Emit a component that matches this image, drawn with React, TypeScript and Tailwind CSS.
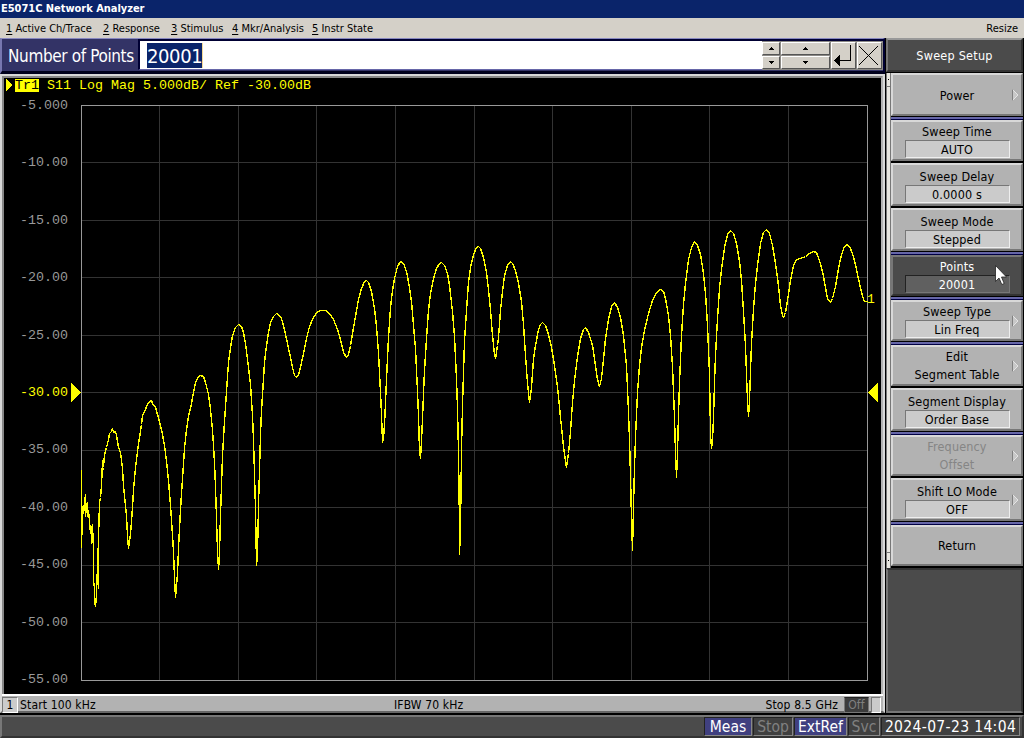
import React from 'react';
import clsx from 'clsx';

const TRACE =
  '81,469 81,547 82,506 82,515 83,505 83,513 84,504 85,494 85,516 86,504 87,502 87,516 88,510 89,520 90,533 91,526 91,543 92,524 93,550 93,580 94,588 94,600 95,606 96,594 97,566 97,548 98,588 98,513 99,526 99,502 100,497 101,485 102,460 102,470 103,467 104,454 106,447 108,439 109,433 111,431 112,428 113,432 115,431 116,435 118,447 120,452 122,468 123,486 124,495 126,516 127,535 128,548 130,533 131,521 132,507 133,489 135,467 137,451 139,437 141,424 142,415 144,411 147,404 149,401 151,400 152,403 155,407 159,421 162,434 164,445 166,461 168,480 170,505 172,535 173,551 174,577 175,597 176,585 177,573 178,548 180,509 182,478 184,448 186,429 188,416 191,403 193,392 195,382 198,376 200,375 203,376 205,382 208,394 210,409 212,429 214,462 215,487 216,518 217,551 218,569 219,553 220,514 221,486 222,455 224,421 226,391 228,362 230,347 232,335 235,327 238,324 241,326 243,332 245,343 247,359 250,384 252,415 253,440 254,473 255,509 256,565 257,553 258,505 259,470 260,434 261,410 262,394 264,362 266,345 268,332 270,322 273,316 276,313 278,314 281,318 284,329 287,343 290,357 292,367 294,375 296,377 298,374 300,367 303,353 306,338 309,326 313,317 317,311 321,310 325,310 329,313 333,319 337,329 340,339 343,352 346,357 348,354 350,345 352,333 355,316 358,299 361,288 364,281 366,280 368,282 371,291 374,308 376,326 378,352 380,392 381,414 382,442 383,438 384,424 385,402 386,379 388,337 390,307 392,290 394,278 397,266 400,261 403,263 406,271 409,287 411,301 413,325 415,348 417,391 418,415 419,450 420,458 421,441 422,418 423,393 424,370 426,338 428,310 430,293 433,278 436,268 439,263 441,262 444,265 447,273 449,285 452,311 454,336 456,378 457,408 458,452 459,525 459,554 460,527 461,450 462,405 463,372 464,340 466,310 468,282 470,267 473,254 476,247 478,246 480,248 483,257 486,272 488,289 490,309 492,335 494,354 495,358 497,345 498,337 500,310 502,291 504,275 507,265 510,261 512,263 515,270 518,283 521,301 523,324 525,355 527,383 529,402 531,387 533,359 535,345 538,329 540,324 542,322 545,325 548,334 551,347 554,365 557,386 560,417 563,446 566,467 568,453 570,431 572,402 574,380 577,356 580,338 583,329 585,327 588,332 592,345 595,365 597,379 599,386 601,378 603,359 605,338 608,319 611,306 614,302 617,307 620,317 623,335 626,365 628,411 629,440 630,475 631,519 632,550 633,506 634,467 635,437 637,392 639,365 641,347 644,330 648,313 652,300 656,292 660,289 663,291 665,298 668,315 670,335 672,366 674,417 675,452 676,477 677,453 678,414 679,382 681,335 683,304 685,283 688,259 691,247 694,241 697,245 700,254 703,273 705,293 707,325 709,373 710,434 711,448 712,440 713,417 714,383 715,355 717,318 719,288 721,269 724,247 727,234 730,230 733,233 736,243 739,261 741,280 743,311 745,346 746,374 747,400 748,416 749,400 750,371 751,343 753,309 755,283 757,265 760,243 763,232 766,229 769,233 772,245 775,263 778,285 780,305 782,315 783,317 785,312 787,300 790,280 793,265 796,259 800,258 805,256 809,253 813,251 816,252 819,260 822,271 825,287 827,298 830,302 832,298 835,286 838,268 841,254 844,246 847,244 850,248 853,256 856,269 859,283 862,296 864,301 867,301';

const GRID_X = [159, 238, 316, 395, 474, 552, 631, 709, 788];
const GRID_Y = [162, 220, 277, 335, 392, 450, 507, 565, 622];

const Y_LABELS = [
  '-5.000', '-10.00', '-15.00', '-20.00', '-25.00', '-30.00',
  '-35.00', '-40.00', '-45.00', '-50.00', '-55.00',
];

const MENU = [
  { hotkey: '1', label: 'Active Ch/Trace', width: 'w-[97px]' },
  { hotkey: '2', label: 'Response', width: 'w-[68px]' },
  { hotkey: '3', label: 'Stimulus', width: 'w-[61px]' },
  { hotkey: '4', label: 'Mkr/Analysis', width: 'w-[80px]' },
  { hotkey: '5', label: 'Instr State', width: 'w-[70px]' },
];

type SoftkeyProps = {
  label: string;
  value?: string;
  second?: string;
  arrow?: boolean;
  active?: boolean;
  disabled?: boolean;
  group?: boolean;
};

const SOFTKEYS: SoftkeyProps[] = [
  { label: 'Power', arrow: true },
  { label: 'Sweep Time', value: 'AUTO', group: true },
  { label: 'Sweep Delay', value: '0.0000 s' },
  { label: 'Sweep Mode', value: 'Stepped' },
  { label: 'Points', value: '20001', active: true, group: true },
  { label: 'Sweep Type', value: 'Lin Freq', arrow: true, group: true },
  { label: 'Edit', second: 'Segment Table', arrow: true, group: true },
  { label: 'Segment Display', value: 'Order Base' },
  { label: 'Frequency', second: 'Offset', arrow: true, disabled: true, group: true },
  { label: 'Shift LO Mode', value: 'OFF', arrow: true },
  { label: 'Return', group: true },
];

function Softkey({ label, value, second, arrow, active, disabled, group }: SoftkeyProps) {
  return (
    <div className="flex h-[45px] flex-col">
      {/* blue divider between softkey groups */}
      {group && <div className="-mt-[2px] h-[4px] shrink-0 border-t border-b border-t-black border-b-[#000044] bg-[#6666a8]" />}
      <div
        className={clsx(
          'relative mb-[2px] flex min-h-0 flex-1 flex-col items-center justify-end border-2 text-[12.5px] leading-[18px] tracking-[0.15px]',
          active
            ? 'border-t-[#777] border-l-[#777] border-r-[#333] border-b-[#333] bg-[#4b4b4b]'
            : 'border-t-[#d8d8d8] border-l-[#d8d8d8] border-r-[#777] border-b-[#777] bg-[#b2b2b2]',
          active ? 'text-white' : disabled ? 'text-[#858585]' : 'text-black',
          !value && !second && 'pb-[9px]',
        )}
      >
        <div className={clsx('whitespace-nowrap', value && 'relative top-px')}>{label}</div>
        {second && <div className="whitespace-nowrap">{second}</div>}
        {value && (
          <div
            className={clsx(
              'mb-px h-[18px] w-[105px] border text-center leading-[17px]',
              active
                ? 'border-t-[#222] border-l-[#222] border-r-[#777] border-b-[#777] bg-[#606060]'
                : 'border-t-[#777] border-l-[#777] border-r-[#eee] border-b-[#eee] bg-[#cbcbcb]',
            )}
          >
            {value}
          </div>
        )}
        {arrow && (
          <svg className="absolute top-1/2 right-[2px] -mt-[6px]" width="7" height="12" viewBox="0 0 7 12">
            <path d="M.5 .5V11.5L6 6Z" fill="#c8c8c8" />
            <path d="M.5 .5L6 6L.5 11.5" stroke="#e4e4e4" fill="none" />
            <path d="M.5 .5V11.5" stroke="#808080" />
          </svg>
        )}
      </div>
    </div>
  );
}

function Spin({ up }: { up?: boolean }) {
  return (
    <div className="flex h-[13px] items-center justify-center border border-t-white border-l-white border-r-[#555] border-b-[#555] bg-[#d4d0c8]">
      <svg width="5" height="3" viewBox="0 0 5 3" shapeRendering="crispEdges">
        <path d={up ? 'M2 0H3V1H4V2H5V3H0V2H1V1H2Z' : 'M0 0H5V1H4V2H3V3H2V2H1V1H0Z'} />
      </svg>
    </div>
  );
}

function EntryBar() {
  return (
    <div className="flex h-[36px] w-[885px] items-start border-t border-l-2 border-t-[#8888c0] border-l-[#7777b0] border-r-2 border-r-[#000033] border-b-[3px] border-b-[#00001c] bg-[#333366]">
      <div className="w-[136px] pl-[6px] text-[17px] leading-[34px] tracking-[-0.37px] whitespace-nowrap text-white">
        Number of Points
      </div>
      <div className="flex h-[31px] flex-1 items-center border-t-2 border-l-2 border-b border-t-[#000033] border-l-[#000033] border-b-[#6666a8] bg-white pl-[7px]">
        <span className="h-[25px] w-[55px] bg-[#0a246a] text-[20px] leading-[26px] tracking-[-0.4px] whitespace-nowrap text-white">
          20001
        </span>
        <span className="h-[25px] w-px bg-[#f5db95]" />
      </div>
      <div className="flex h-[31px] w-[121px] gap-px border-t-2 border-t-[#000033] bg-[#8c8a86] pt-px pr-px">
        <div className="flex w-[18px] flex-col gap-px">
          <Spin up />
          <Spin />
        </div>
        <div className="flex w-[49px] flex-col gap-px">
          <Spin up />
          <Spin />
        </div>
        <div className="h-[27px] w-[25px] border border-t-white border-l-white border-r-[#555] border-b-[#555] bg-[#d4d0c8]">
          <svg width="23" height="25" viewBox="0 0 23 25" shapeRendering="crispEdges">
            <path d="M18.5 2V17.5H8" stroke="#000" fill="none" />
            <path d="M2 17.5L8 12V23Z" />
          </svg>
        </div>
        <div className="h-[27px] w-[25px] border border-t-white border-l-white border-r-[#555] border-b-[#555] bg-[#d4d0c8]">
          <svg width="23" height="25" viewBox="0 0 23 25">
            <path d="M1 3L20 22M20 3L1 22" stroke="#000" fill="none" />
          </svg>
        </div>
      </div>
    </div>
  );
}

function Plot() {
  return (
    <div className="relative h-[616px] w-full bg-black font-['Liberation_Mono',monospace] text-[13.33px]">
      <div className="flex h-[14px] items-center pl-px leading-[14px] text-[#ffff00]">
        <svg width="9" height="12" viewBox="0 0 9 12" shapeRendering="crispEdges">
          <path d="M1 0L8 6L1 12Z" fill="#ffff00" />
        </svg>
        <span className="ml-px h-[13px] w-[24px] bg-[#ffff00] leading-[14px] text-black">Tr1</span>
        <span className="ml-[8px] pt-px whitespace-pre">S11 Log Mag 5.000dB/ Ref -30.00dB</span>
      </div>
      <div className="flex h-[595px] w-[64px] flex-col justify-between pt-[7px]">
        {Y_LABELS.map((label) => (
          <div
            key={label}
            className={clsx('h-[14px] text-right leading-[14px]', label === '-30.00' ? 'text-[#ffff00]' : 'text-[#999]')}
          >
            {label}
          </div>
        ))}
      </div>
      {/* grid, trace and reference markers */}
      <svg className="absolute inset-0" width="877" height="616" viewBox="4 78 877 616" shapeRendering="crispEdges">
        {GRID_X.map((x) => (
          <rect key={x} x={x} y="105" width="1" height="575" fill="#333" />
        ))}
        {GRID_Y.map((y) => (
          <rect key={y} x="81" y={y} width="786" height="1" fill="#333" />
        ))}
        <rect x="81.5" y="105.5" width="786" height="575" fill="none" stroke="#999" />
        <polyline points={TRACE} transform="translate(.5 .5)" fill="none" stroke="#ffff00" strokeWidth="1.4" strokeLinejoin="bevel" />
        <path d="M71 383V402L81 392.5Z" fill="#ffff00" />
        <path d="M878 383V402L868 392.5Z" fill="#ffff00" />
        <text x="867" y="303" fontSize="13" fill="#ffff00">1</text>
      </svg>
    </div>
  );
}

function ChannelWindow() {
  return (
    <div className="flex h-[639px] w-[885px] flex-col border-2 border-t-[#d8d8d8] border-l-[#d8d8d8] border-r-[#d8d8d8] border-b-[#666] bg-[#b2b2b2]">
      <div className="h-[618px] border-t-2 border-l-2 border-r-2 border-t-[#888] border-l-[#888] border-r-[#b2b2b2]">
        <Plot />
      </div>
      <div className="flex h-[19px] items-center border-t-2 border-t-white text-[12px] leading-[17px] tracking-[0.15px] whitespace-nowrap text-black">
        <div className="h-[16px] w-[16px] border border-t-[#777] border-l-[#777] border-r-white border-b-white bg-[#cbcbcb] text-center leading-[15px]">
          1
        </div>
        <div className="ml-[2px] w-[374px] pt-px">Start 100 kHz</div>
        <div className="flex-1 pt-px">IFBW 70 kHz</div>
        <div className="mr-[6px] pt-px">Stop 8.5 GHz</div>
        <div className="mr-[2px] h-[16px] w-[25px] border border-t-[#222] border-l-[#777] border-r-[#777] border-b-[#777] bg-[#3c3c3c] text-center leading-[15px] text-[#808080]">
          Off
        </div>
        <div className="mr-[2px] h-[16px] w-[10px] border border-t-[#777] border-l-[#777] border-r-white border-b-white bg-[#cbcbcb]" />
      </div>
    </div>
  );
}

function SoftkeyPanel() {
  return (
    <div className="flex h-[675px] w-[138px] flex-col bg-black pr-px">
      <div className="h-[34px] border-2 border-t-[#999] border-l-[#777] border-r-[#333] border-b-[#333] bg-[#4b4b4b] text-center text-[12.5px] leading-[32px] tracking-[0.25px] text-white">
        Sweep Setup
      </div>
      <div className="flex pt-px">
        <div className="flex h-[495px] w-[5px] flex-col justify-between border-x border-x-[#777] bg-[#e8e6e0] text-black">
          <div className="flex h-[14px] items-center justify-center border-b border-b-[#777]">
            <i className="size-px bg-black" />
          </div>
          <div className="flex h-[16px] items-center justify-center border-t border-t-[#777]">
            <i className="size-px bg-black" />
          </div>
        </div>
        <div className="w-[132px]">
          {SOFTKEYS.map((key) => (
            <Softkey key={key.label} {...key} />
          ))}
        </div>
      </div>
      <div className="flex-1 border-2 border-t-[#333] border-l-[#777] border-r-[#333] border-b-[#777] bg-[#4b4b4b]" />
    </div>
  );
}

function StatusBar() {
  const box = 'h-[19px] border border-t-[#222] border-l-[#222] border-r-[#888] border-b-[#888] text-center leading-[18px]';
  return (
    <div className="flex h-[23px] w-full items-center justify-end gap-px border-2 border-t-[#777] border-l-[#777] border-r-[#333] border-b-[#333] bg-[#4b4b4b] pr-[2px] text-[15.5px] whitespace-nowrap text-white">
      <div className={clsx(box, 'w-[48px] bg-[#404080]')}>Meas</div>
      <div className={clsx(box, 'w-[40px] bg-[#404040] text-[#808080]')}>Stop</div>
      <div className={clsx(box, 'w-[53px] bg-[#404080]')}>ExtRef</div>
      <div className={clsx(box, 'w-[32px] bg-[#404040] text-[#808080]')}>Svc</div>
      <div className={clsx(box, 'w-[139px] bg-[#404040] tracking-[0.35px]')}>2024-07-23 14:04</div>
    </div>
  );
}

export default function App() {
  return (
    <div className="relative flex h-[738px] w-[1024px] flex-col overflow-hidden bg-black font-['DejaVu_Sans_Condensed','DejaVu_Sans',sans-serif]">
      <div className="h-[18px] bg-[#0a246a] pl-px text-[11px] leading-[18px] font-bold tracking-[-0.03px] text-white">
        E5071C Network Analyzer
      </div>
      <div className="flex h-[20px] items-center bg-[#d4d0c8] pt-px pl-[6px] text-[11px] leading-[19px] whitespace-nowrap text-black">
        {MENU.map((item) => (
          <div key={item.hotkey} className={item.width}>
            <span className="underline underline-offset-2">{item.hotkey}</span> {item.label}
          </div>
        ))}
        <div className="ml-auto pr-[6px]">Resize</div>
      </div>
      <div className="flex h-[677px] gap-px">
        <div className="flex flex-col">
          <EntryBar />
          <ChannelWindow />
        </div>
        <SoftkeyPanel />
      </div>
      <StatusBar />

      {/* mouse pointer */}
      <svg className="absolute top-[265px] left-[995px]" width="12" height="21" viewBox="0 0 12 21">
        <path d="M.5 .5V16.5L4 13L6.8 19.5L9.2 18.5L6.5 12H11.5Z" fill="#fff" stroke="#222" strokeWidth=".8" />
      </svg>
    </div>
  );
}
